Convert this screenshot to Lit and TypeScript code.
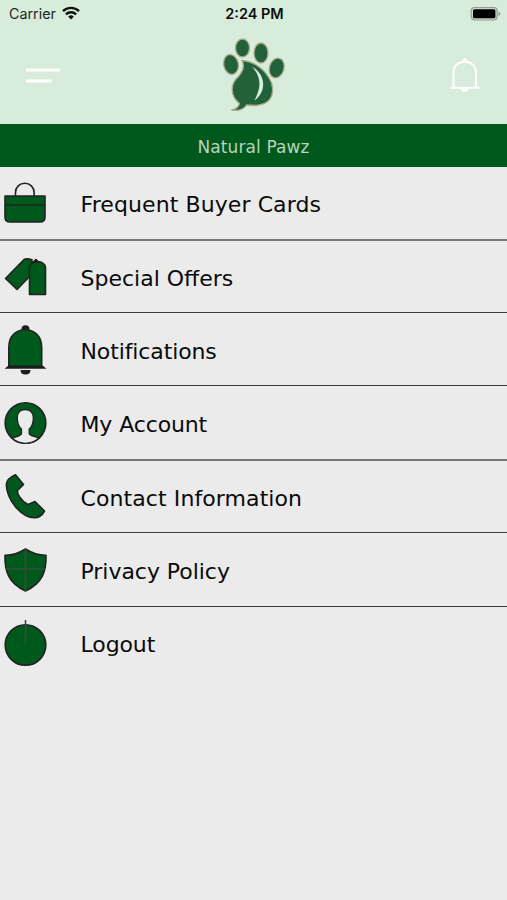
import { LitElement, html, svg, css, SVGTemplateResult } from "lit";
import { customElement } from "lit/decorators.js";

interface Item {
  label: string;
  spacing: number;
  top: number;
  height: number;
  soft?: boolean;
  icon: SVGTemplateResult;
}

const items: Item[] = [
  {
    label: "Frequent Buyer Cards", spacing: 0.09, top: 167, height: 74, soft: true,
    icon: svg`<path class="line" d="M15.500 196v-3.500a9.300 9.300 0 0 1 18.600 0v3.500"/>
      <path class="shape" d="M5 196h40v21q0 5-5 5H10q-5 0-5-5z"/><path class="line" d="M5 205h40"/>`,
  },
  {
    label: "Special Offers", spacing: 0, top: 241, height: 72,
    icon: svg`<path class="shape" d="M5.500 278.500L24 259.500Q27 258 32 259.800L31 275L17 289.500Z"/>
      <path class="shape" d="M29.500 294.500V267.500Q30 262.500 37 261.500Q45 262 45.500 267.500V294.500z"/><path class="dark" d="M31 263l5-4.500 2.500 2.500-3 2z"/>`,
  },
  {
    label: "Notifications", spacing: -0.12, top: 313, height: 73,
    icon: svg`<circle class="dark" cx="25.500" cy="329.300" r="4"/><path class="dark" d="M20.500 370h10q0 4.500-5 4.500t-5-4.500z"/>
      <path class="shape" d="M8.800 367V347.500C8.800 336 16 329.700 25.200 329.700S41.700 336 41.700 347.500V367z"/>
      <path class="dark" d="M4.500 368.800l4-3.300h34l4 3.300z"/>`,
  },
  {
    label: "My Account", spacing: -0.12, top: 386, height: 75, soft: true,
    icon: svg`<circle class="shape" cx="25.500" cy="423" r="20.300"/>
      <path class="hole" d="M12 438.300C17 436 21 436 21.500 433.500V429C17.800 426 17.300 422 17.300 418C17.300 412 21 409.500 25.200 409.500S33.300 412 33.300 418C33.300 422 32.800 426 29.200 429V433.500C30 436 34 436 39 438.300Q32.500 443.300 25.500 443.300T12 438.300z"/>`,
  },
  {
    label: "Contact Information", spacing: 0.09, top: 461, height: 72,
    icon: svg`<path class="shape" d="M15.500 474.800L23.500 484.500L17.500 490.500Q17.200 494 20 497.500Q23.500 502.500 28 504.500L35 501.500L44.500 511Q41 517.500 34.500 517.800Q25.500 518 16 507.500Q6.500 496 6.300 484.500Q7 478.500 15.500 474.800z"/>`,
  },
  {
    label: "Privacy Policy", spacing: -0.04, top: 533, height: 74,
    icon: svg`<path class="shape" d="M25.500 549Q15 555.500 5 555.300C4.500 571 8.500 583 25.500 591C42.500 583 46.500 571 46 555.300Q36 555.500 25.500 549z"/>
      <path class="line cross" d="M25.500 549v42M6.500 569h38"/>`,
  },
  {
    label: "Logout", spacing: -0.1, top: 607, height: 75,
    icon: svg`<circle class="shape" cx="25.500" cy="645" r="20.300"/><path class="line cross" d="M25.500 620v25"/>`,
  },
];

@customElement("app-root")
export class AppRoot extends LitElement {
  static styles = css`
    :host { display: block; height: 900px; background: #ebebeb; color: #0a0a0a; font-family: Verdana, "DejaVu Sans", sans-serif; overflow: hidden; }
    svg { display: block; flex: none; }
    .head { height: 124px; background: #d8ecdc; }
    .status { height: 28px; display: grid; grid-template-columns: 1fr auto 1fr; align-items: center; padding: 0 5px 0 9px; box-sizing: border-box; font: 14.300px/28px Inter, sans-serif; color: #1c2a20; }
    .carrier { display: flex; align-items: center; gap: 6px; }
    .carrier svg { margin-top: -2px; }
    .time { font-weight: 600; font-size: 14.500px; color: #0b0f0c; margin-right: 2px; }
    .battery { justify-self: end; margin-top: -1px; }
    .nav { height: 96px; display: flex; justify-content: space-between; }
    .title { height: 43px; background: #00591c; color: #b9d3be; text-align: center; font-size: 17px; line-height: 46px; letter-spacing: 0.1px; }
    .row { display: flex; align-items: center; box-sizing: border-box; border-bottom: 1px solid #3c3c3c; }
    .row.soft { border-bottom: 2px solid #777; }
    .row:last-child { border: 0; }
    .label { font-size: 22px; padding-top: 3px; }
    .row:nth-of-type(5) .label { padding-top: 5px; }
    .row:last-child .label { padding-top: 0; }
    .icon { margin-right: 30.500px; align-self: flex-start; }
    .shape { fill: #00591c; stroke: #222; stroke-width: 1.6; stroke-linejoin: round; }
    .line { fill: none; stroke: #222; stroke-width: 1.6; }
    .cross { stroke: #3c4a3c; }
    .dark { fill: #1c1c1c; }
    .hole { fill: #ebebeb; stroke: #222; stroke-width: 1.3; }
    .thin { fill: none; stroke: #fcfffc; stroke-width: 2; }
    .menu { fill: none; stroke: #fcfffc; stroke-width: 3; }
    .paw { fill: #23613a; stroke: #a9ab8c; stroke-width: 1.3; }
  `;

  render() {
    return html`
      <div class="head">
        <div class="status">
          <div class="carrier"><span>Carrier</span>
            <svg width="18" height="14" viewBox="0 0 18 14" fill="none" stroke="#111" stroke-width="2.400"><path d="M1 5.200a11.300 11.300 0 0 1 16 0M3.900 8.300a7.200 7.200 0 0 1 10.200 0"/><path d="M6.200 10.700a4 4 0 0 1 5.600 0L9 13.500z" fill="#111" stroke="none"/></svg>
          </div>
          <span class="time">2:24 PM</span>
          <svg class="battery" width="32" height="16" viewBox="0 0 32 16"><rect x="1.200" y="1.500" width="26" height="12.500" rx="3.500" fill="#c9d6cb" stroke="#8f9d92" stroke-width="1.200"/><rect x="3" y="3.300" width="22.400" height="9" rx="1.500" fill="#000"/><path d="M28.500 5.500q4 2.300 0 4.600z" fill="#8f9d92"/></svg>
        </div>
        <div class="nav">
          <svg width="100" height="96" viewBox="0 28 100 96"><path class="menu" d="M26 70h34M26 81h26"/></svg>
          <svg width="110" height="96" viewBox="199 28 110 96">
            <g class="paw"><ellipse cx="242.500" cy="48" rx="7" ry="9"/><ellipse cx="261" cy="53" rx="7" ry="10"/>
            <ellipse cx="231" cy="64.500" rx="7.300" ry="10" transform="rotate(-12 231 64.500)"/><ellipse cx="276.700" cy="68" rx="7.300" ry="10" transform="rotate(16 276.700 68)"/>
            <path d="M242 60.500C253 61 266 69 271.500 83C275 96 270 104 256 105.500Q250 105.500 246.500 105Q242 112 231.500 110Q238 109 239.500 103.500C230 96 230 84 238 77Q246 68 242 60.500z"/></g>
            <path d="M252 66.500C267 76 266 92 254.500 100.500C260 89 263 79 252 66.500z" fill="#d8ecdc"/>
          </svg>
          <svg width="100" height="96" viewBox="407 28 100 96"><path class="thin" d="M453.500 87V72.500C453.500 66 458 61.700 464.700 61.700S476 66 476 72.500V87M450.500 87.700h29"/><circle cx="464.700" cy="60.500" r="2.300" fill="#fcfffc"/><path d="M460.500 88h8q0 4-4 4t-4-4z" fill="#fcfffc"/></svg>
        </div>
      </div>
      <div class="title">Natural Pawz</div>
      ${items.map((i) => html`<div class="row ${i.soft ? "soft" : ""}" style="height:${i.height}px">
        <svg class="icon" width="50" height="${i.height - 2}" viewBox="0 ${i.top} 50 ${i.height - 2}">${i.icon}</svg>
        <span class="label" style="letter-spacing:${i.spacing}px">${i.label}</span></div>`)}
    `;
  }
}
